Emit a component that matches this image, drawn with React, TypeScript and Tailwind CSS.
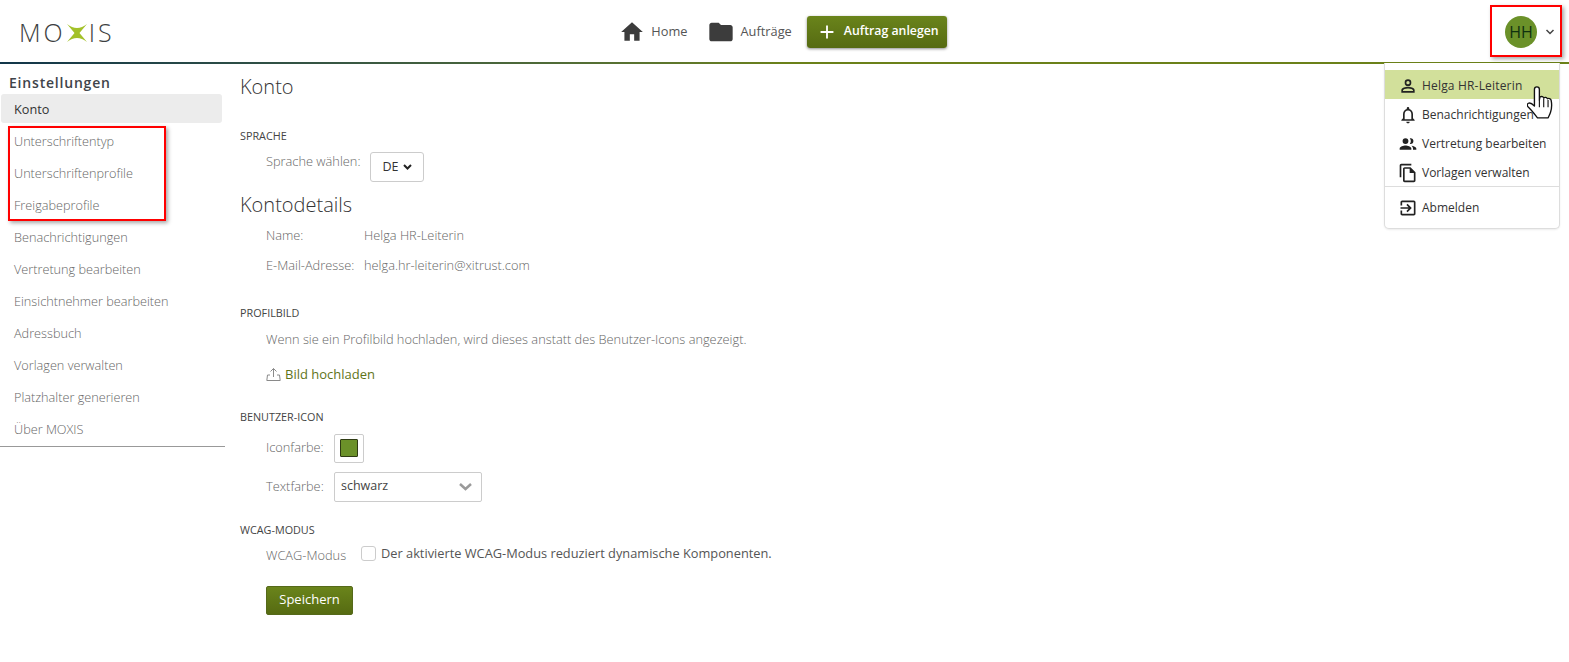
import { ReactNode } from "react";

const navItems = [
  "Konto",
  "Unterschriftentyp",
  "Unterschriftenprofile",
  "Freigabeprofile",
  "Benachrichtigungen",
  "Vertretung bearbeiten",
  "Einsichtnehmer bearbeiten",
  "Adressbuch",
  "Vorlagen verwalten",
  "Platzhalter generieren",
  "Über MOXIS",
];

const Icon = ({ d, size = 20, className = "" }: { d: string; size?: number; className?: string }) => (
  <svg width={size} height={size} viewBox="0 0 24 24" fill="currentColor" className={className}>
    <path d={d} />
  </svg>
);

const Logo = () => (
  <div className="flex items-center text-[25px] font-[350] leading-none text-[#3d3f42] tracking-[3px] w-[100px]">
    <span>MO</span>
    <svg width="20" height="18" viewBox="0 0 20 18" className="ml-[1px]">
      <path d="M0 0 Q10 8 20 0 Q15 6 12.500 9 Q15 12 20 18 Q10 10 0 18 Q5 12 7.500 9 Q5 6 0 0Z" fill="#a3c129" />
    </svg>
    <span className="ml-[2px]">IS</span>
  </div>
);

const Header = () => (
  <header className="relative h-[64px] shrink-0">
    <div className="flex h-[63px] items-center justify-center">
      <div className="flex items-center pr-[3px] text-[12.800px] text-[#555]">
        <Icon size={26} className="text-[#3c3c3c] mr-[6px]" d="M10 20v-6h4v6h5v-8h3L12 3 2 12h3v8z" />
        <span className="mr-[19px]">Home</span>
        <Icon size={28} className="text-[#3c3c3c] mr-[6px]" d="M10 4H4c-1.100 0-2 .9-2 2v12c0 1.100.9 2 2 2h16c1.100 0 2-.9 2-2V8c0-1.100-.9-2-2-2h-8l-2-2z" />
        <span className="mr-[15px]">Aufträge</span>
        <button className="flex h-[32px] items-center rounded-[3px] bg-gradient-to-b from-[#6a841b] to-[#566b12] pl-[9px] pr-[8px] text-[12.300px] font-semibold text-white shadow-[0_1px_3px_rgba(0,0,0,0.45)]">
          <Icon size={22} className="mr-[6px]" d="M19 13h-6v6h-2v-6H5v-2h6V5h2v6h6v2z" />
          Auftrag anlegen
        </button>
      </div>
    </div>
    <div className="absolute left-0 right-0 top-[62px] h-[2px] bg-gradient-to-r from-[#12364a] via-[#6b8119] to-[#6b8119]" />
    <div className="absolute left-[19px] top-[20px]">
      <Logo />
    </div>
    <div className="absolute left-[1505px] top-[16px] flex items-center">
      <div className="flex h-[32px] w-[32px] items-center justify-center rounded-full bg-[#6b9129] text-[16px] text-[#10300f]">
        HH
      </div>
      <svg width="10" height="6" viewBox="0 0 10 6" className="ml-[8px]" fill="none" stroke="#444" strokeWidth="1.500">
        <path d="M1.500 1l3.500 3.500L8.500 1" />
      </svg>
    </div>
  </header>
);

const Sidebar = () => (
  <aside className="w-[225px] shrink-0">
    <div className="border-b border-[#999] pb-[1px]">
      <h2 className="pl-[9px] pt-[9px] pb-[1px] text-[14px] font-semibold leading-[20px] tracking-[0.8px] text-[#3f444a]">
        Einstellungen
      </h2>
      <ul className="text-[12.700px] font-light">
        {navItems.map((item, idx) => (
          <li
            key={item}
            className={
              idx === 0
                ? "ml-[1px] mr-[3px] flex h-[29px] items-center rounded-[3px] bg-[#ececec] pl-[13px] pt-[2px] text-[#333] font-normal mb-[2px]"
                : "flex h-[32px] items-center pl-[14px] pt-[2px] text-[#666]"
            }
          >
            {item}
          </li>
        ))}
      </ul>
    </div>
  </aside>
);

const SectionLabel = ({ children, className = "" }: { children: ReactNode; className?: string }) => (
  <div className={`text-[10.800px] font-normal leading-[14px] text-[#444] ${className}`}>{children}</div>
);

const MainContent = () => (
  <main className="flex-1 pl-[15px] text-[12.800px] font-light text-[#666]">
    <h1 className="pt-[9px] text-[20px] font-light leading-[28px] text-[#333]">Konto</h1>
    <SectionLabel className="mt-[28px]">SPRACHE</SectionLabel>
    <div className="mt-[9px] flex items-start pl-[26px]">
      <span className="w-[104px] leading-[16px] pt-[1px]">Sprache wählen:</span>
      <div className="flex h-[30px] w-[54px] items-center justify-center rounded-[3px] border border-[#ccc] text-[12.500px] font-normal text-[#333]">
        DE
        <svg width="9" height="6" viewBox="0 0 9 6" className="ml-[4px]" fill="none" stroke="#222" strokeWidth="2">
          <path d="M1 1l3.500 3.500L8 1" />
        </svg>
      </div>
    </div>
    <h2 className="mt-[9px] text-[20px] font-light leading-[28px] text-[#333]">Kontodetails</h2>
    <div className="mt-[2px] pl-[26px]">
      <div className="flex h-[30px] items-center">
        <span className="w-[98px]">Name:</span>
        <span>Helga HR-Leiterin</span>
      </div>
      <div className="flex h-[30px] items-center">
        <span className="w-[98px]">E-Mail-Adresse:</span>
        <span>helga.hr-leiterin@xitrust.com</span>
      </div>
    </div>
    <SectionLabel className="mt-[25px]">PROFILBILD</SectionLabel>
    <p className="mt-[11px] pl-[26px] leading-[16px]">
      Wenn sie ein Profilbild hochladen, wird dieses anstatt des Benutzer-Icons angezeigt.
    </p>
    <div className="mt-[18px] flex items-center pl-[26px] text-[13px] font-normal text-[#5f7418]">
      <svg width="15" height="15" viewBox="0 0 15 15" fill="none" stroke="#8a8a8a" strokeWidth="1" className="mr-[4px]">
        <path d="M7.500 10V1.500M4.500 4.500l3-3 3 3M4 8H1.500L.8 13.500h13.400L13.500 8H11" />
      </svg>
      Bild hochladen
    </div>
    <SectionLabel className="mt-[25px]">BENUTZER-ICON</SectionLabel>
    <div className="mt-[10px] flex items-center pl-[26px]">
      <span className="w-[68px]">Iconfarbe:</span>
      <div className="flex h-[29px] w-[30px] items-center justify-center rounded-[2px] border border-[#ccc]">
        <div className="h-[18px] w-[18px] rounded-[1px] border border-[#2f3b14] bg-[#6b9129]" />
      </div>
    </div>
    <div className="mt-[9px] flex items-center pl-[26px]">
      <span className="w-[68px]">Textfarbe:</span>
      <div className="flex h-[30px] w-[148px] items-center justify-between rounded-[2px] border border-[#ccc] pl-[6px] pr-[9px] text-[12.500px] font-normal text-[#444]">
        schwarz
        <svg width="13" height="8" viewBox="0 0 13 8" fill="none" stroke="#9a9a9a" strokeWidth="2.500">
          <path d="M1 1l5.500 5L12 1" />
        </svg>
      </div>
    </div>
    <SectionLabel className="mt-[21px]">WCAG-MODUS</SectionLabel>
    <div className="mt-[6px] flex items-center pl-[26px]">
      <span className="w-[95px] pt-[3px]">WCAG-Modus</span>
      <div className="mr-[5px] h-[15px] w-[15px] rounded-[3px] border border-[#ccc]" />
      <span className="text-[12.800px] font-normal text-[#555]">Der aktivierte WCAG-Modus reduziert dynamische Komponenten.</span>
    </div>
    <div className="mt-[21px] pl-[26px]">
      <button className="flex h-[29px] w-[87px] items-center justify-center rounded-[2px] border border-[#55691a] bg-gradient-to-b from-[#6a841b] to-[#566b12] text-[13px] font-normal text-white">
        Speichern
      </button>
    </div>
  </main>
);

const menuItems = [
  { label: "Helga HR-Leiterin", d: "M12 4a4 4 0 1 1 0 8 4 4 0 0 1 0-8zm0 2a2 2 0 1 0 0 4 2 2 0 0 0 0-4zm0 7c2.700 0 8 1.300 8 4v3H4v-3c0-2.700 5.300-4 8-4zm0 2c-3 0-6 1.300-6 2v1h12v-1c0-.7-3-2-6-2z" },
  { label: "Benachrichtigungen", d: "M12 22c1.100 0 2-.9 2-2h-4c0 1.100.9 2 2 2zm6-6v-5c0-3.070-1.630-5.640-4.500-6.320V4a1.500 1.500 0 0 0-3 0v.68C7.640 5.360 6 7.920 6 11v5l-2 2v1h16v-1l-2-2zm-2 1H8v-6c0-2.480 1.510-4.500 4-4.500s4 2.020 4 4.500v6z" },
  { label: "Vertretung bearbeiten", d: "M9 12a3.500 3.500 0 1 0 0-7 3.500 3.500 0 0 0 0 7zm0 1.800c-2.300 0-7 1.200-7 3.500V19h14v-1.700c0-2.300-4.700-3.500-7-3.500zM15 12a3.500 3.500 0 0 0 0-7c-.3 0-.6 0-.9.1a5.500 5.500 0 0 1 0 6.800c.3.100.6.100.9.100zm1 2c1.200.8 2 1.900 2 3.300V19h4v-1.700c0-1.900-3.300-3-6-3.300z" },
  { label: "Vorlagen verwalten", d: "M16 1H4c-1.100 0-2 .9-2 2v14h2V3h12V1zm-1 4H8c-1.100 0-2 .9-2 2v14c0 1.100.9 2 2 2h11c1.100 0 2-.9 2-2V11l-6-6zM8 21V7h6v5h5v9H8z" },
];

const UserMenu = () => (
  <div className="absolute left-[1384px] top-[63px] w-[176px] h-[166px] rounded-b-[5px] border border-t-0 border-[#ddd] bg-white pt-[7px] text-[12px] text-[#333] shadow-[0_1px_2px_rgba(0,0,0,0.08)]">
    {menuItems.map((item, idx) => (
      <div key={item.label} className={`flex h-[29px] items-center pl-[13px] pt-[3px] ${idx === 0 ? "bg-[#d2e09b] tracking-[0.18px]" : ""}`}>
        <Icon size={20} d={item.d} className="mr-[4px] text-[#222]" />
        {item.label}
      </div>
    ))}
    <div className="border-t border-[#ddd] pt-[6px]">
      <div className="flex h-[29px] items-center pl-[13px]">
        <Icon
          size={20}
          className="mr-[4px] text-[#222]"
          d="M10.090 15.590L11.500 17l5-5-5-5-1.410 1.410L12.670 11H3v2h9.670l-2.580 2.590zM19 3H5c-1.110 0-2 .9-2 2v4h2V5h14v14H5v-4H3v4c0 1.100.89 2 2 2h14c1.100 0 2-.9 2-2V5c0-1.100-.9-2-2-2z"
        />
        Abmelden
      </div>
    </div>
  </div>
);

const HandCursor = () => (
  <svg width="26" height="34" viewBox="1 2 21 27" className="absolute left-[1527px] top-[86px]">
    <path
      d="M9 2.500c1.200 0 2 .9 2 2V13l.5-2.500c1.500-.6 2.700-.1 3 1 .8-.8 2.400-.7 3 .6 1-.6 2.600-.3 3 1.200.6 3 .4 7-.5 9.700-.6 1.900-1.400 3-1.900 4.500H9.500C7.500 25 5 21.500 1.800 18.500c-.9-1-.7-2.300.3-2.800 1.300-.6 3.300.6 4.900 2.300V4.500c0-1.100.8-2 2-2z"
      fill="#fff"
      stroke="#111"
      strokeWidth="1.100"
      strokeLinejoin="round"
    />
    <path d="M11 13v6M14.500 12v7M18 13v6" stroke="#111" strokeWidth="0.900" />
  </svg>
);

const App = () => (
  <div className="relative h-[662px] w-[1569px] overflow-hidden bg-white font-['Open_Sans',sans-serif]">
    <Header />
    <div className="flex">
      <Sidebar />
      <MainContent />
    </div>
    <UserMenu />
    <HandCursor />
    {/* red annotation frames */}
    <div className="absolute left-[8px] top-[126px] h-[95px] w-[158px] border-2 border-[#f00] shadow-[2px_2px_4px_rgba(0,0,0,0.35)]" />
    <div className="absolute left-[1490px] top-[5px] h-[52px] w-[72px] border-2 border-[#f00] shadow-[2px_2px_4px_rgba(0,0,0,0.35)]" />
  </div>
);

export default App;
